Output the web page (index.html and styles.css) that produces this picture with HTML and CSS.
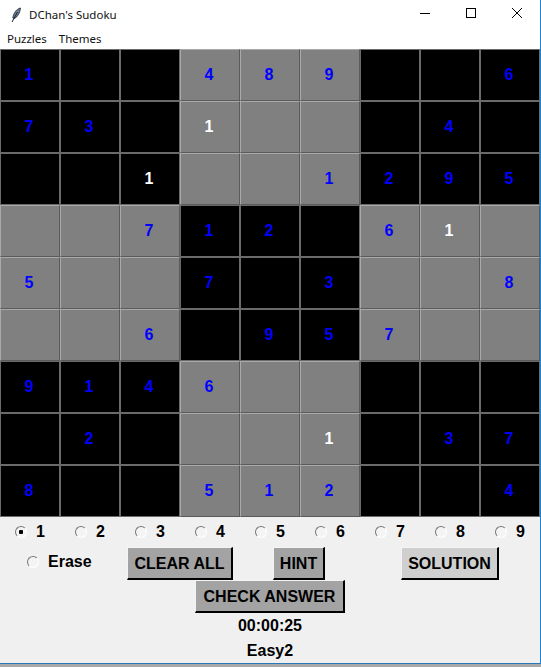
FILE: index.html
```html
<!DOCTYPE html>
<html lang="en">
<head>
  <meta charset="UTF-8" />
  <title>DChan's Sudoku</title>
  <link rel="stylesheet" href="styles.css">
</head>
<body>
<div class="window">

  <!-- Title bar -->
  <div class="titlebar">
    <svg class="feather" width="16" height="16" viewBox="0 0 16 16">
      <path d="M12.5 1 C8.5 2 5.5 6 4.8 11 L6.5 11.5 C9.5 10 12 6 12.5 1 Z" fill="#6f8098" stroke="#1c2430" stroke-width="0.8"/>
      <path d="M9.5 5 L4 15" stroke="#1c2430" stroke-width="1" fill="none"/>
    </svg>
    <span class="title">DChan's Sudoku</span>
    <div class="controls">
      <svg class="control" width="46" height="29" viewBox="0 0 46 29"><path d="M18 13.5 H28" stroke="#000" fill="none"/></svg>
      <svg class="control" width="46" height="29" viewBox="0 0 46 29"><rect x="18.5" y="8.5" width="9" height="9" stroke="#000" fill="none"/></svg>
      <svg class="control" width="46" height="29" viewBox="0 0 46 29"><path d="M18 8 L28 18 M28 8 L18 18" stroke="#000" fill="none"/></svg>
    </div>
  </div>

  <!-- Menu -->
  <div class="menubar">
    <span>Puzzles</span>
    <span>Themes</span>
  </div>

  <!-- Board -->
  <div class="board">
    <div class="cell dark">1</div><div class="cell dark"></div><div class="cell dark"></div><div class="cell light">4</div><div class="cell light">8</div><div class="cell light">9</div><div class="cell dark"></div><div class="cell dark"></div><div class="cell dark">6</div>
    <div class="cell dark">7</div><div class="cell dark">3</div><div class="cell dark"></div><div class="cell light given">1</div><div class="cell light"></div><div class="cell light"></div><div class="cell dark"></div><div class="cell dark">4</div><div class="cell dark"></div>
    <div class="cell dark"></div><div class="cell dark"></div><div class="cell dark given">1</div><div class="cell light"></div><div class="cell light"></div><div class="cell light">1</div><div class="cell dark">2</div><div class="cell dark">9</div><div class="cell dark">5</div>
    <div class="cell light"></div><div class="cell light"></div><div class="cell light">7</div><div class="cell dark">1</div><div class="cell dark">2</div><div class="cell dark"></div><div class="cell light">6</div><div class="cell light given">1</div><div class="cell light"></div>
    <div class="cell light">5</div><div class="cell light"></div><div class="cell light"></div><div class="cell dark">7</div><div class="cell dark"></div><div class="cell dark">3</div><div class="cell light"></div><div class="cell light"></div><div class="cell light">8</div>
    <div class="cell light"></div><div class="cell light"></div><div class="cell light">6</div><div class="cell dark"></div><div class="cell dark">9</div><div class="cell dark">5</div><div class="cell light">7</div><div class="cell light"></div><div class="cell light"></div>
    <div class="cell dark">9</div><div class="cell dark">1</div><div class="cell dark">4</div><div class="cell light">6</div><div class="cell light"></div><div class="cell light"></div><div class="cell dark"></div><div class="cell dark"></div><div class="cell dark"></div>
    <div class="cell dark"></div><div class="cell dark">2</div><div class="cell dark"></div><div class="cell light"></div><div class="cell light"></div><div class="cell light given">1</div><div class="cell dark"></div><div class="cell dark">3</div><div class="cell dark">7</div>
    <div class="cell dark">8</div><div class="cell dark"></div><div class="cell dark"></div><div class="cell light">5</div><div class="cell light">1</div><div class="cell light">2</div><div class="cell dark"></div><div class="cell dark"></div><div class="cell dark">4</div>
  </div>

  <!-- Number picker -->
  <div class="picker">
    <label class="pick"><input type="radio" name="num" checked />1</label>
    <label class="pick"><input type="radio" name="num" />2</label>
    <label class="pick"><input type="radio" name="num" />3</label>
    <label class="pick"><input type="radio" name="num" />4</label>
    <label class="pick"><input type="radio" name="num" />5</label>
    <label class="pick"><input type="radio" name="num" />6</label>
    <label class="pick"><input type="radio" name="num" />7</label>
    <label class="pick"><input type="radio" name="num" />8</label>
    <label class="pick"><input type="radio" name="num" />9</label>
  </div>

  <!-- Actions -->
  <div class="actions">
    <label class="erase"><input type="radio" name="num" />Erase</label>
    <button class="btn clear">CLEAR ALL</button>
    <button class="btn hint">HINT</button>
    <button class="btn solution">SOLUTION</button>
  </div>
  <div class="check-row">
    <button class="btn check">CHECK ANSWER</button>
  </div>
  <div class="timer">00:00:25</div>
  <div class="level">Easy2</div>
</div>
</body>
</html>
```

FILE: styles.css
```css
html, body {
  margin: 0;
  padding: 0;
}

body {
  font-family: 'Liberation Sans', Arial, sans-serif;
  background-color: #a9a9a9;
  overflow: hidden;
}

.window {
  width: 540px;
  height: 663px;
  background-color: #f0f0f0;
  border-right: 1px solid #1883d7;
  border-bottom: 1px solid #2a78b8;
  overflow: hidden;
}

.titlebar {
  display: flex;
  align-items: center;
  height: 29px;
  padding-left: 8px;
  background: white;
}

.feather {
  margin-right: 5px;
}

.title {
  font-family: 'Noto Sans', sans-serif;
  font-size: 11.5px;
  color: #111;
}

.controls {
  display: flex;
  margin-left: auto;
}

.menubar {
  display: flex;
  gap: 12px;
  height: 20px;
  padding-left: 7px;
  background: white;
  font-family: 'Noto Sans', sans-serif;
  font-size: 11.5px;
  line-height: 20px;
  color: #111;
}

.board {
  display: grid;
  grid-template-columns: repeat(9, 60px);
  grid-template-rows: repeat(9, 52px);
}

.cell {
  display: flex;
  align-items: center;
  justify-content: center;
  box-sizing: border-box;
  padding-right: 2px;
  border: 1px solid #6a6a6a;
  font-size: 16px;
  font-weight: bold;
  color: #0000ff;
}

.dark {
  background-color: black;
}

.light {
  border-color: #aaa #5a5a5a #5a5a5a #aaa;
  background-color: #808080;
}

.given {
  color: white;
}

.picker {
  display: grid;
  grid-template-columns: repeat(9, 60px);
  height: 30px;
  align-items: center;
}

.pick {
  display: flex;
  align-items: center;
  padding-left: 15px;
  font-size: 16px;
  font-weight: bold;
  color: black;
}

input[type="radio"] {
  appearance: none;
  box-sizing: border-box;
  width: 12px;
  height: 12px;
  margin: 0 9px 0 0;
  border: 1px solid #777;
  border-right-color: white;
  border-bottom-color: white;
  border-radius: 50%;
  background: #f4f4f4;
}

input[type="radio"]:checked {
  background: radial-gradient(circle, black 0 2px, #f4f4f4 2.5px);
}

.actions {
  display: flex;
  align-items: flex-start;
  height: 33px;
}

.erase {
  display: flex;
  align-items: center;
  width: 100px;
  height: 30px;
  margin-left: 27px;
  font-size: 16px;
  font-weight: bold;
  color: black;
}

.btn {
  box-sizing: border-box;
  height: 33px;
  padding: 1px 0 0;
  border: 1px solid;
  border-color: #f4f4f4 black black #f4f4f4;
  border-width: 1px 2px 2px 1px;
  background-color: #a3a3a3;
  font-family: 'Liberation Sans', Arial, sans-serif;
  font-size: 16px;
  font-weight: bold;
  color: black;
}

.clear {
  width: 106px;
}

.hint {
  width: 52px;
  margin-left: 40px;
}

.solution {
  width: 98px;
  margin-left: 76px;
  background-color: #cfcfcf;
}

.check-row {
  display: flex;
  justify-content: center;
}

.check {
  width: 150px;
}

.timer, .level {
  text-align: center;
  font-size: 16px;
  font-weight: bold;
  color: black;
}

.timer {
  margin-top: 1px;
  line-height: 24px;
}

.level {
  line-height: 26px;
}
```
